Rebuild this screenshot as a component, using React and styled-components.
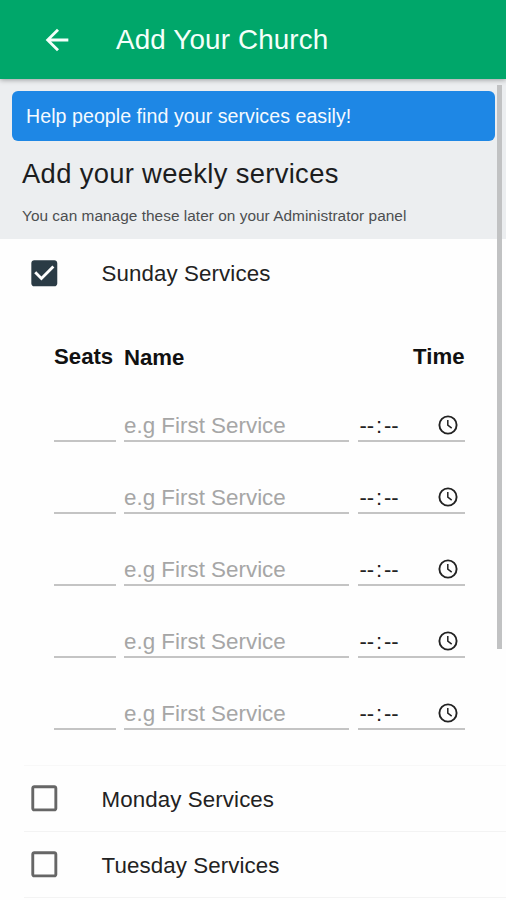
import React from 'react';
import styled, { createGlobalStyle } from 'styled-components';

const GlobalStyle = createGlobalStyle`
  * {
    box-sizing: border-box;
  }
  body {
    margin: 0;
    background: #fff;
    font-family: "Liberation Sans", Arial, sans-serif;
  }
`;

const Screen = styled.div`
  position: relative;
  display: flex;
  flex-direction: column;
  height: 900px;
  overflow: hidden;
  background: #fefefe;
`;

const AppBar = styled.header`
  position: relative;
  z-index: 1;
  flex: none;
  display: flex;
  align-items: center;
  height: 79px;
  padding: 1px 0 0 40px;
  color: #f4fffa;
  background: #00a76a;
  box-shadow: 0 1px 5px rgba(0, 0, 0, 0.35);
`;

const AppTitle = styled.h1`
  margin: 0 0 0 42px;
  font-size: 27.8px;
  font-weight: 400;
  line-height: 36px;
  letter-spacing: 0.15px;
`;

const Intro = styled.section`
  flex: none;
  height: 160px;
  padding: 12px 11px 0 12px;
  background: #eceef0;
`;

const Banner = styled.div`
  height: 50px;
  padding-left: 14px;
  border-radius: 6px;
  color: #f5faff;
  background: #1e87e5;
  font-size: 19.6px;
  line-height: 50px;
  letter-spacing: 0.05px;
`;

const Heading = styled.h2`
  margin: 15px 0 0 10px;
  color: #1c1d1e;
  font-size: 27.4px;
  font-weight: 400;
  line-height: 36px;
  letter-spacing: 0.32px;
`;

const Hint = styled.p`
  margin: 14px 0 0 10px;
  color: #4c4e50;
  font-size: 15.4px;
  line-height: 20px;
  letter-spacing: 0.03px;
`;

const DayRow = styled.div`
  flex: none;
  display: flex;
  align-items: center;
  height: ${({ open }) => (open ? 68 : 66)}px;
  margin-left: 24px;
  padding-left: 3px;
  border-bottom: ${({ open }) => (open ? 0 : 1)}px solid #f3f3f3;
`;

const DayLabel = styled.span`
  margin-left: 40px;
  padding-top: 2px;
  color: #222;
  font-size: 22.3px;
  line-height: 30px;
  letter-spacing: 0.1px;
`;

const Services = styled.div`
  flex: none;
  height: 459px;
  margin-left: 24px;
  padding: 32px 0 0 30px;
  border-bottom: 1px solid #f8f8f8;
`;

const ServiceRow = styled.div`
  display: grid;
  grid-template-columns: 61.5px 225px 107px;
  column-gap: 8.5px;
`;

const ColumnTitle = styled.div`
  height: 36px;
  padding-top: ${({ drop }) => drop || 0}px;
  color: #111;
  font-size: 22.2px;
  font-weight: 700;
  line-height: 36px;
  text-align: ${({ align }) => align || 'left'};
`;

const Field = styled.div`
  display: flex;
  align-items: center;
  justify-content: space-between;
  height: 36px;
  margin-bottom: 36px;
  padding-top: 5px;
  border-bottom: 2px solid #c4c4c4;
  color: ${({ muted }) => (muted ? '#a6a6a6' : '#222')};
  font-size: 22.4px;
  white-space: nowrap;
`;

const Rows = styled.div`
  padding-top: 31px;
`;

const TimeText = styled.span`
  padding-left: 2px;
  font-size: 22px;
`;

const Colon = styled.span`
  padding: 0 1.8px;
`;

const Clock = styled.svg`
  margin: -2px 5px 0 0;
`;

const ScrollThumb = styled.div`
  position: absolute;
  z-index: 2;
  top: 85px;
  right: 4px;
  width: 5px;
  height: 564px;
  background: #c1c2c3;
`;

const BackIcon = () => (
  <svg width="34" height="34" viewBox="0 0 24 24" fill="currentColor">
    <path d="M20 11H7.83l5.59-5.59L12 4l-8 8 8 8 1.41-1.41L7.83 13H20v-2z" />
  </svg>
);

const CheckIcon = ({ checked }) => (
  <svg width="34.6" height="34.6" viewBox="0 0 24 24" fill={checked ? '#2a3b45' : '#666'}>
    {checked ? (
      <path d="M19 3H5c-1.11 0-2 .9-2 2v14c0 1.1.89 2 2 2h14c1.11 0 2-.9 2-2V5c0-1.1-.89-2-2-2zm-9 14l-5-5 1.41-1.41L10 14.17l7.59-7.59L19 8l-9 9z" />
    ) : (
      <path d="M19 5v14H5V5h14m0-2H5c-1.1 0-2 .9-2 2v14c0 1.1.9 2 2 2h14c1.1 0 2-.9 2-2V5c0-1.1-.9-2-2-2z" />
    )}
  </svg>
);

const ClockIcon = () => (
  <Clock width="24" height="24" viewBox="0 0 24 24" fill="none" stroke="#222">
    <circle cx="12" cy="12" r="8.6" strokeWidth="1.9" />
    <path d="M11.8 7v5.2l3.9 2.9" strokeWidth="1.5" />
  </Clock>
);

const TimeField = () => (
  <Field>
    <TimeText>
      --<Colon>:</Colon>--
    </TimeText>
    <ClockIcon />
  </Field>
);

const Day = ({ name, open }) => (
  <DayRow open={open}>
    <CheckIcon checked={open} />
    <DayLabel>{name} Services</DayLabel>
  </DayRow>
);

const slots = [1, 2, 3, 4, 5];

const App = () => (
  <Screen>
    <GlobalStyle />
    <AppBar>
      <BackIcon />
      <AppTitle>Add Your Church</AppTitle>
    </AppBar>
    <Intro>
      <Banner>Help people find your services easily!</Banner>
      <Heading>Add your weekly services</Heading>
      <Hint>You can manage these later on your Administrator panel</Hint>
    </Intro>
    <Day name="Sunday" open />
    <Services>
      <ServiceRow>
        <ColumnTitle>Seats</ColumnTitle>
        <ColumnTitle drop={1}>Name</ColumnTitle>
        <ColumnTitle align="right">Time</ColumnTitle>
      </ServiceRow>
      <Rows>
        {slots.map((slot) => (
          <ServiceRow key={slot}>
            <Field />
            <Field muted>e.g First Service</Field>
            <TimeField />
          </ServiceRow>
        ))}
      </Rows>
    </Services>
    <Day name="Monday" />
    <Day name="Tuesday" />
    <ScrollThumb />
  </Screen>
);

export default App;
